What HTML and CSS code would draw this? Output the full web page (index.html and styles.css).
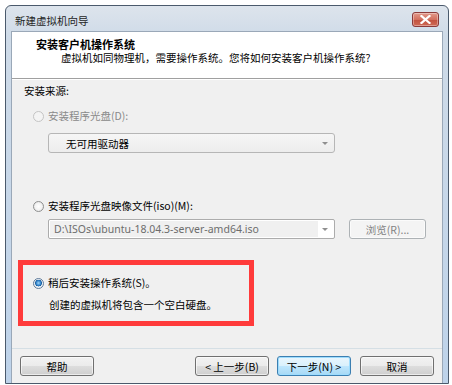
FILE: index.html
```html
<!DOCTYPE html>
<html lang="zh-CN">
<head>
  <meta charset="UTF-8" />
  <title>新建虚拟机向导</title>
  <link rel="stylesheet" href="styles.css">
</head>
<body>
  <div class="window">
    <div class="titlebar">
      <span class="title">新建虚拟机向导</span>
      <div class="close-btn">
        <svg width="11" height="9" viewBox="0 0 11 9">
          <path d="M1.5 1 L9.5 8 M9.5 1 L1.5 8" stroke="#fff" stroke-width="2.2" stroke-linecap="square"/>
        </svg>
      </div>
    </div>

    <div class="client">
      <div class="header">
        <div class="header-title">安装客户机操作系统</div>
        <div class="header-sub">虚拟机如同物理机，需要操作系统。您将如何安装客户机操作系统?</div>
      </div>

      <div class="body">
        <div class="section-label">安装来源:</div>

        <div class="radio-row disabled first">
          <span class="radio"></span>
          <span>安装程序光盘(D):</span>
        </div>
        <div class="select">
          <span>无可用驱动器</span>
          <span class="arrow"></span>
        </div>

        <div class="radio-row iso">
          <span class="radio"></span>
          <span>安装程序光盘映像文件(iso)(M):</span>
        </div>
        <div class="iso-line">
          <div class="combo">
            <span class="combo-text">D:\ISOs\ubuntu-18.04.3-server-amd64.iso</span>
            <span class="arrow"></span>
          </div>
          <div class="btn disabled-btn">浏览(R)...</div>
        </div>

        <!-- red annotation box -->
        <div class="highlight">
          <div class="radio-row">
            <span class="radio checked"></span>
            <span>稍后安装操作系统(S)。</span>
          </div>
          <div class="note">创建的虚拟机将包含一个空白硬盘。</div>
        </div>
      </div>

      <div class="footer">
        <div class="btn">帮助</div>
        <div class="footer-right">
          <div class="btn">&lt; 上一步(B)</div>
          <div class="btn default">下一步(N) &gt;</div>
          <div class="btn cancel">取消</div>
        </div>
      </div>
    </div>
  </div>
</body>
</html>
```

FILE: styles.css
```css
body {
  margin: 0;
  background: #fff;
  font-family: "Noto Sans CJK SC", "Noto Sans", sans-serif;
  font-size: 10.5px;
  color: #000;
}
.window {
  position: relative;
  margin: 5px 0 0 5px;
  width: 432px;
  height: 352px;
  padding: 25px 5px 0 5px;
  border: 1px solid #4b5a6c;
  border-radius: 6px 6px 0 0;
  background: linear-gradient(to bottom, #dde4ec 0, #cfdbe8 30px, #bed3ea 100%);
  display: flex;
  flex-direction: column;
}
.titlebar {
  position: absolute;
  top: 0;
  left: 0;
  right: 0;
  height: 25px;
  display: flex;
  align-items: center;
  justify-content: space-between;
  padding: 0 9px;
}
.title {
  color: #1e1e1e;
  margin-top: 3px;
}
.close-btn {
  width: 25px;
  height: 13px;
  margin-top: 2px;
  border: 1px solid #8b3a3a;
  border-radius: 3px;
  background: linear-gradient(to bottom, #e29a8c 0, #d3705f 50%, #c1503d 51%, #cf6a55 100%);
  display: flex;
  align-items: center;
  justify-content: center;
  box-shadow: inset 0 0 0 1px rgba(255,255,255,0.35);
}
.client {
  flex: 1;
  background: #f0f0f0;
  border: 1px solid #9aa8b8;
  border-bottom: none;
  display: flex;
  flex-direction: column;
}
.header {
  background: #fff;
  height: 47px;
  border-bottom: 1px solid #a0a0a0;
  box-shadow: 0 1px 0 #fff;
  padding: 4px 0 0 24px;
  box-sizing: border-box;
}
.header-title {
  font-weight: bold;
  font-size: 11px;
  line-height: 16px;
}
.header-sub {
  padding-left: 25px;
  line-height: 16px;
  margin-top: -2px;
}
.body {
  flex: 1;
  padding: 4px 0 0 12px;
}
.section-label {
  line-height: 16px;
}
.radio-row {
  display: flex;
  align-items: center;
  gap: 4px;
  line-height: 16px;
  padding-left: 9px;
}
.radio-row.first {
  margin-top: 9px;
}
.radio-row.iso {
  margin-top: 45px;
}
.disabled {
  color: #8a8a8a;
}
.radio {
  width: 11px;
  height: 11px;
  border-radius: 50%;
  border: 1px solid #8e8f8f;
  background: radial-gradient(circle at 50% 50%, #fff 0, #f4f4f4 50%, #dcdcdc 100%);
  box-sizing: border-box;
  flex: none;
}
.disabled .radio {
  border-color: #c4c4c4;
  background: #f4f4f4;
}
.radio.checked {
  border-color: #5f7b9a;
  background: radial-gradient(circle at 50% 45%, #9fd5f6 0, #2a7cc6 2.5px, #1c5e9a 3.2px, #e8eef4 3.6px, #f6f6f6 100%);
}
.select {
  margin: 9px 0 0 24px;
  width: 287px;
  height: 20px;
  border: 1px solid #b6b6b6;
  border-radius: 3px;
  background: linear-gradient(to bottom, #f6f6f6, #ededed);
  box-sizing: border-box;
  display: flex;
  align-items: center;
  justify-content: space-between;
  padding: 0 6px 0 17px;
}
.arrow {
  width: 0;
  height: 0;
  border-left: 3px solid transparent;
  border-right: 3px solid transparent;
  border-top: 3px solid #8f8f8f;
}
.iso-line {
  display: flex;
  align-items: center;
  gap: 14px;
  margin: 5px 0 0 24px;
}
.combo {
  width: 287px;
  height: 20px;
  border: 1px solid #acacac;
  border-radius: 2px;
  background: #fff;
  box-sizing: border-box;
  display: flex;
  align-items: center;
  justify-content: space-between;
  padding: 1px 6px 1px 1px;
}
.combo-text {
  background: #f0f0f0;
  color: #6d6d6d;
  width: 268px;
  height: 16px;
  line-height: 16px;
  padding-left: 4px;
  box-sizing: border-box;
  font-family: "Noto Sans", sans-serif;
}
.btn {
  width: 74px;
  height: 20px;
  border: 1px solid #707070;
  border-radius: 3px;
  box-sizing: border-box;
  background: linear-gradient(to bottom, #f2f2f2 0, #ebebeb 50%, #dddddd 51%, #cfcfcf 100%);
  display: flex;
  align-items: center;
  justify-content: center;
  box-shadow: inset 0 0 0 1px rgba(255,255,255,0.6);
}
.btn.disabled-btn {
  width: 77px;
  border-color: #adb2b5;
  background: #f4f4f4;
  color: #838383;
}
.btn.default {
  border-color: #3c7fb1;
  background: linear-gradient(to bottom, #eaf6fd 0, #d9f0fc 50%, #bee6fd 51%, #a7d9f5 100%);
  box-shadow: inset 0 0 0 1px #9ddcfe;
}
.highlight {
  margin: 21px 0 0 -6px;
  width: 236px;
  height: 66px;
  border: 5px solid #ff3b3b;
  box-sizing: border-box;
  padding-top: 10px;
}
.highlight .radio-row {
  padding-left: 10px;
}
.note {
  margin-top: 6px;
  padding-left: 26px;
  line-height: 16px;
}
.footer {
  height: 35px;
  border-top: 1px solid #d5dfe5;
  display: flex;
  align-items: flex-start;
  justify-content: space-between;
  padding: 7px 8px 0 8px;
  box-sizing: border-box;
}
.footer-right {
  display: flex;
  gap: 8px;
}
.footer-right .cancel {
  margin-left: 1px;
}
```
